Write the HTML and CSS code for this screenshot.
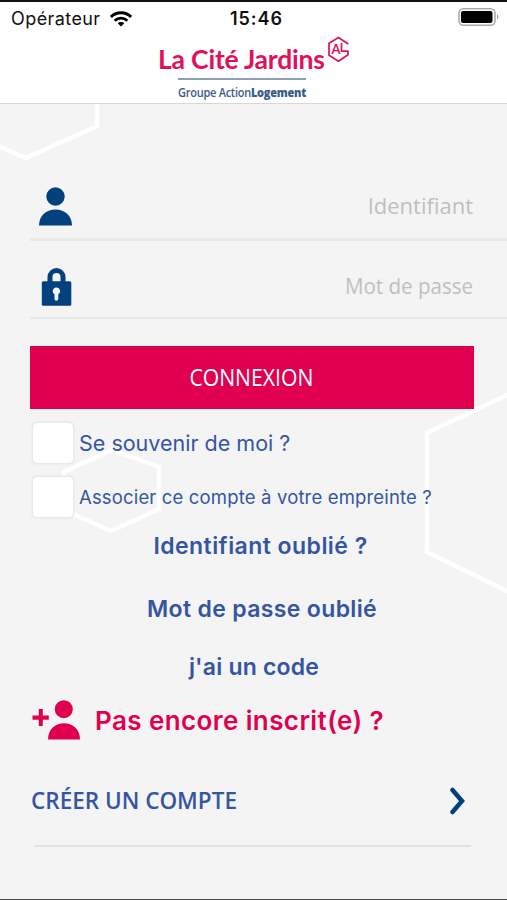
FILE: index.html
```html
<!DOCTYPE html>
<html lang="fr">
<head>
<meta charset="utf-8">
<title>La Cité Jardins</title>
<link rel="stylesheet" href="styles.css">
</head>
<body>
<div class="screen">
  <header class="header">
    <div class="status">
      <div class="carrier"><span>Opérateur</span>
        <svg width="22" height="16" viewBox="0 0 22 16" fill="none" stroke="#000" stroke-width="2.9"><path d="M.9 5.900C6.500.4 15.500.4 21.100 5.900M4.700 9.700c3.600-3.400 9-3.400 12.600 0"/><path d="M11 15.500l-3.300-3.300c1.800-1.600 4.800-1.600 6.600 0z" fill="#000" stroke="none"/></svg>
      </div>
      <div class="clock">15:46</div>
      <svg class="battery" width="42" height="18" viewBox="0 0 42 18"><rect x="1" y=".8" width="36" height="16.400" rx="4.500" fill="#fff" stroke="#aaa" stroke-width="1.600"/><rect x="3" y="3" width="31.500" height="12" rx="2" fill="#000"/><path d="M39 6.200c1.700.8 1.700 4.400 0 5.200z" fill="#999"/></svg>
    </div>
    <div class="logo">
      <div class="logo-top">
        <span class="logo-name">La Cité Jardins</span>
        <svg class="logo-mark" width="23" height="28" viewBox="0 0 23 28"><path d="M21.300 9L11.500 2.500 2 8.200v12l9.500 6 9.500-6.500v-3.500h-6.500V8" fill="none" stroke="#e0105a" stroke-width="1.700"/><text class="logo-al" x="4.500" y="18.500">A</text></svg>
      </div>
      <div class="logo-group"><div class="logo-line"><span>Groupe Action</span><b>Logement</b></div></div>
    </div>
  </header>
  <main class="content">
    <svg class="pattern" width="507" height="796" viewBox="0 103 507 796" fill="none" stroke="#fff" stroke-width="4.500"><path d="M97 103v22l-71 32-30-13M112 449l-48 22v38l47 21 48-22v-42zM509 393l-82 39v119l82 40"/></svg>
    <form class="form">
      <label class="field"><svg width="34" height="40" viewBox="0 0 34 40" fill="#03417e"><circle cx="17.500" cy="9.500" r="9.200"/><path d="M1 38.500C1 17 34 17 34 38.500z"/></svg><span class="ph user">Identifiant</span></label>
      <label class="field second"><svg width="34" height="40" viewBox="0 0 34 40"><path d="M12 15V10a6.500 6.500 0 0 1 13 0v5" fill="none" stroke="#03417e" stroke-width="5"/><rect x="3.800" y="14.300" width="29.500" height="24.500" rx="1.500" fill="#03417e"/><path d="M16.500 27.300a3.700 3.700 0 1 1 3.800 0v4.500a1.900 1.900 0 0 1-3.800 0z" fill="#f4f4f4"/></svg><span class="ph pass">Mot de passe</span></label>
      <button class="submit" type="button"><span>CONNEXION</span></button>
      <label class="check"><i class="box"></i><span class="remember">Se souvenir de moi ?</span></label>
      <label class="check"><i class="box"></i><span class="touch">Associer ce compte à votre empreinte ?</span></label>
    </form>
    <nav class="links">
      <a class="l1">Identifiant oublié ?</a>
      <a class="l2">Mot de passe oublié</a>
      <a class="l3">j'ai un code</a>
    </nav>
    <section class="signup">
      <div class="question"><svg width="48" height="40" viewBox="0 0 48 40" fill="#e1004f"><circle cx="31.800" cy="9.200" r="9"/><path d="M16 39.500C16 17.800 48 17.800 48 39.500zM6.800 9h4v6.500h6v4.200h-6V26h-4v-6.300H.5v-4.200h6.300z"/></svg><span>Pas encore inscrit(e) ?</span></div>
      <div class="create"><span>CRÉER UN COMPTE</span><svg width="18" height="30" viewBox="0 0 18 30"><path d="M4.500 5L14 16 4.500 27" fill="none" stroke="#03417e" stroke-width="4.500" stroke-linecap="round" stroke-linejoin="miter"/></svg></div>
    </section>
  </main>
</div>
</body>
</html>
```
FILE: styles.css
```css
* { box-sizing: border-box; }
body { margin: 0; }
.screen {
  display: flex;
  flex-direction: column;
  width: 507px;
  height: 900px;
  background: #f4f4f4;
  border-top: 2px solid #111;
  border-bottom: 1px solid #444;
  font-family: Inter, sans-serif;
  color: #35569f;
  overflow: hidden;
}
.header {
  display: flex;
  flex-direction: column;
  height: 102px;
  flex: none;
  background: #fff;
  border-bottom: 1px solid #d8d8d8;
}
.status {
  display: grid;
  grid-template-columns: 1fr auto 1fr;
  align-items: center;
  width: 100%;
  height: 33px;
  padding: 0 7px 0 11px;
  color: #111;
}
.carrier { display: flex; align-items: center; gap: 9px; font-size: 18px; letter-spacing: .42px; }
.clock { font-size: 18px; font-weight: 600; letter-spacing: 1px; padding-left: 2px; }
.battery { justify-self: end; margin-top: -3px; }
.logo { padding-left: 158px; color: #e0105a; font-family: Lato, sans-serif; }
.logo-top { display: flex; height: 43px; }
.logo-name { width: 169px; padding-top: 8px; font-size: 26.500px; font-weight: 700; line-height: 32px; letter-spacing: -.2px; white-space: nowrap; }
.logo-al { font: 700 13px Lato, sans-serif; fill: #e0105a; }
.logo-group {
  width: 128px;
  margin-left: 20px;
  padding-top: 4px;
  border-top: 2px solid #8b9fb7;
  color: #3a5b87;
  font: 600 13px/16px "Open Sans", sans-serif;
}
.logo-line { display: flex; white-space: nowrap; letter-spacing: -.3px; transform: scaleX(.845); transform-origin: left; }
.content { position: relative; flex: 1; }
.pattern { position: absolute; top: 0; left: 0; }
.form, .links, .signup { position: relative; }
.form { padding-top: 57px; }
.field {
  display: flex;
  align-items: center;
  justify-content: space-between;
  height: 80px;
  margin-left: 30px;
  padding: 14px 34px 0 8px;
  border-bottom: 3px solid #e8e8e8;
}
.field.second { height: 78px; padding-top: 15px; border-bottom-width: 2px; }
.ph { color: #bfbfbf; font: 22px "Open Sans", sans-serif; margin-top: -4px; }
.pass { transform: scaleX(.935); transform-origin: right; }
.submit {
  display: block;
  width: 444px;
  height: 63px;
  margin: 27px 0 0 29.500px;
  padding: 0 0 1px;
  border: 0;
  background: #e1004f;
  color: #fff;
  font: 23px "Open Sans", sans-serif;
}
.submit span { display: inline-block; transform: scaleX(.92); }
.check { display: flex; align-items: center; gap: 5px; height: 42px; margin: 13px 0 0 32px; }
.check + .check { margin-top: 12px; }
.box {
  width: 42px;
  height: 42px;
  border: 1px solid #e9e9e9;
  border-radius: 5px;
  background: #fff;
  box-shadow: 0 0 2px #ddd;
}
.remember { font-size: 21.500px; }
.touch { font-size: 18.500px; letter-spacing: .16px; }
.links { display: flex; flex-direction: column; align-items: center; padding: 13px 0 0 17px; }
.links a { font-size: 23px; font-weight: 600; line-height: 30px; margin-bottom: 33px; letter-spacing: .45px; }
.links .l1 { margin-right: 3px; }
.links .l2 { margin-bottom: 28px; letter-spacing: .35px; }
.links .l3 { margin: 0 16px 0 0; letter-spacing: .2px; }
.question { display: flex; align-items: center; gap: 15px; height: 40px; margin: 18px 0 0 32px; color: #e1004f; font-size: 26px; font-weight: 600; letter-spacing: .4px; }
.create {
  display: flex;
  align-items: center;
  justify-content: space-between;
  height: 92px;
  margin: 15px 36px 0 34px;
  padding-right: 5px;
  border-bottom: 2px solid #e1e1df;
  font: 600 22.500px "Open Sans", sans-serif;
}
.create span { margin-left: -3px; margin-top: 1px; }
```
